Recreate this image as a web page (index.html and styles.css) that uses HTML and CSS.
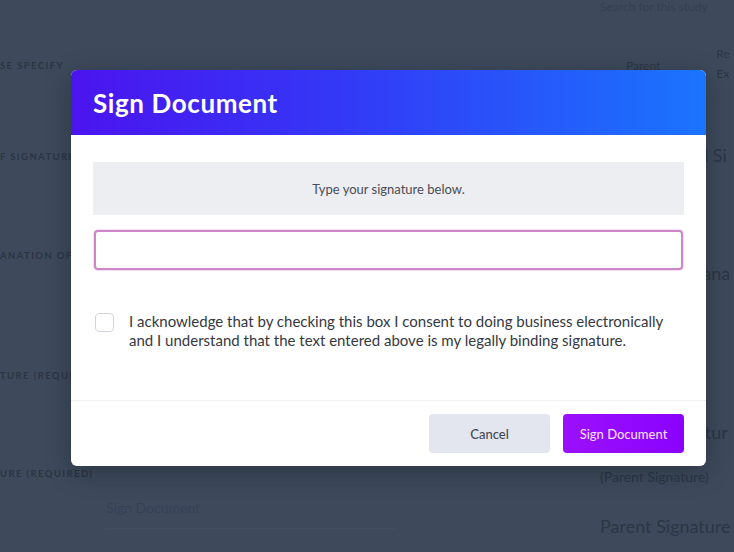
FILE: index.html
```html
<!DOCTYPE html>
<html lang="en">
<head>
<meta charset="utf-8">
<title>Sign Document</title>
<link rel="stylesheet" href="styles.css">
</head>
<body>
<div class="page">
  <div class="form">
    <div class="label l1">se specify</div>
    <div class="label l2">f signature</div>
    <div class="label l3">anation of</div>
    <div class="label l4">ture (required)</div>
    <div class="label l5">ure (required)</div>
    <div class="placeholder">Sign Document</div>
  </div>
  <div class="side">
    <div class="search">Search for this study</div>
    <div class="table-head">
      <span class="th-parent">Parent</span>
      <span class="th-re">Re<br>Ex</span>
    </div>
    <div class="big s1">l Si</div>
    <div class="big s2">lana</div>
    <div class="big s3">atur</div>
    <div class="small-note">(Parent Signature)</div>
    <div class="big s4">Parent Signature</div>
  </div>
</div>

<div class="modal">
  <div class="modal-header">
    <h1 class="modal-title">Sign Document</h1>
  </div>
  <div class="modal-body">
    <div class="hint">Type your signature below.</div>
    <input class="sig-input" type="text" aria-label="Signature">
    <label class="consent">
      <span class="checkbox"></span>
      <span class="consent-text">I acknowledge that by checking this box I consent to doing business electronically and I understand that the text entered above is my legally binding signature.</span>
    </label>
  </div>
  <div class="modal-footer">
    <button class="btn btn-cancel">Cancel</button>
    <button class="btn btn-sign">Sign Document</button>
  </div>
</div>
</body>
</html>
```

FILE: styles.css
```css
html, body {
  margin: 0;
  padding: 0;
}
body {
  width: 734px;
  height: 552px;
  overflow: hidden;
  background: #3e4a5b;
  font-family: "Lato", "Open Sans", sans-serif;
  position: relative;
}
.page {
  display: grid;
  grid-template-columns: 598px 136px;
  height: 552px;
}
.form {
  display: flex;
  flex-direction: column;
  padding-top: 60px;
}
.label {
  font-size: 9.5px;
  font-weight: 700;
  letter-spacing: 1.4px;
  text-transform: uppercase;
  color: #2b3543;
  line-height: 12px;
  white-space: nowrap;
}
.l2 { margin-top: 79px; }
.l3 { margin-top: 87px; }
.l4 { margin-top: 108px; }
.l5 { margin-top: 86px; }
.placeholder {
  margin-top: 19px;
  margin-left: 106px;
  width: 290px;
  font-size: 14px;
  color: #35415a;
  padding-bottom: 12px;
  border-bottom: 1px solid #414e5f;
}
.side {
  display: flex;
  flex-direction: column;
  color: #2c3645;
  padding-left: 2px;
  white-space: nowrap;
}
.search {
  font-size: 12px;
  color: #344052;
  line-height: 14px;
}
.table-head {
  display: flex;
  margin-top: 30px;
  font-size: 12px;
  line-height: 20px;
}
.th-parent { margin-left: 26px; margin-top: 12px; }
.th-re { margin-left: 56px; }
.big {
  font-size: 18px;
  color: #2c3645;
  line-height: 22px;
}
.s1 { margin-top: 60px; margin-left: 104px; }
.s2 { margin-top: 96px; margin-left: 98px; }
.s3 { margin-top: 137px; margin-left: 96px; }
.small-note {
  margin-top: 25px;
  font-size: 14px;
  color: #2c3645;
}
.s4 { margin-top: 30px; }

/* modal */
.modal {
  position: absolute;
  left: 71px;
  top: 70px;
  width: 635px;
  height: 396px;
  background: #ffffff;
  border-radius: 6px;
  overflow: hidden;
  display: flex;
  flex-direction: column;
  box-shadow: 0 6px 24px rgba(10, 16, 28, 0.35);
}
.modal-header {
  height: 65px;
  flex: none;
  background: linear-gradient(90deg, #4b14ef 0%, #3536f6 40%, #1a74fd 100%);
  display: flex;
  align-items: center;
  padding-left: 22px;
}
.modal-title {
  margin: 0;
  color: #ffffff;
  font-size: 26px;
  font-weight: 700;
  letter-spacing: 0.6px;
}
.modal-body {
  flex: 1;
  padding: 27px 22px 0;
  display: flex;
  flex-direction: column;
  border-bottom: 1px solid #eeeff2;
}
.hint {
  height: 53px;
  background: #eceef1;
  display: flex;
  align-items: center;
  justify-content: center;
  font-size: 13px;
  color: #4a4d55;
}
.sig-input {
  margin: 15px 1px 0;
  height: 40px;
  box-sizing: border-box;
  border: 2px solid #cd86c6;
  border-radius: 4px;
  box-shadow: 0 0 0 1px rgba(220, 160, 215, 0.35);
  outline: none;
  font-family: inherit;
  font-size: 14px;
}
.consent {
  margin-top: 43px;
  display: flex;
  gap: 15px;
  padding-left: 2px;
}
.checkbox {
  flex: none;
  width: 19px;
  height: 19px;
  box-sizing: border-box;
  border: 1.5px solid #d3d5de;
  border-radius: 4px;
}
.consent-text {
  font-size: 15px;
  line-height: 19px;
  color: #35383f;
  margin-top: -1px;
}
.modal-footer {
  flex: none;
  height: 65px;
  display: flex;
  justify-content: flex-end;
  align-items: center;
  gap: 13px;
  padding-right: 22px;
}
.btn {
  width: 121px;
  height: 39px;
  border: none;
  border-radius: 4px;
  font-family: inherit;
  font-size: 13px;
  font-weight: 500;
  cursor: pointer;
}
.btn-cancel {
  background: #e3e5ef;
  color: #454a55;
}
.btn-sign {
  background: linear-gradient(90deg, #9b10fb, #8a02ff);
  color: #f4dcff;
}
```
